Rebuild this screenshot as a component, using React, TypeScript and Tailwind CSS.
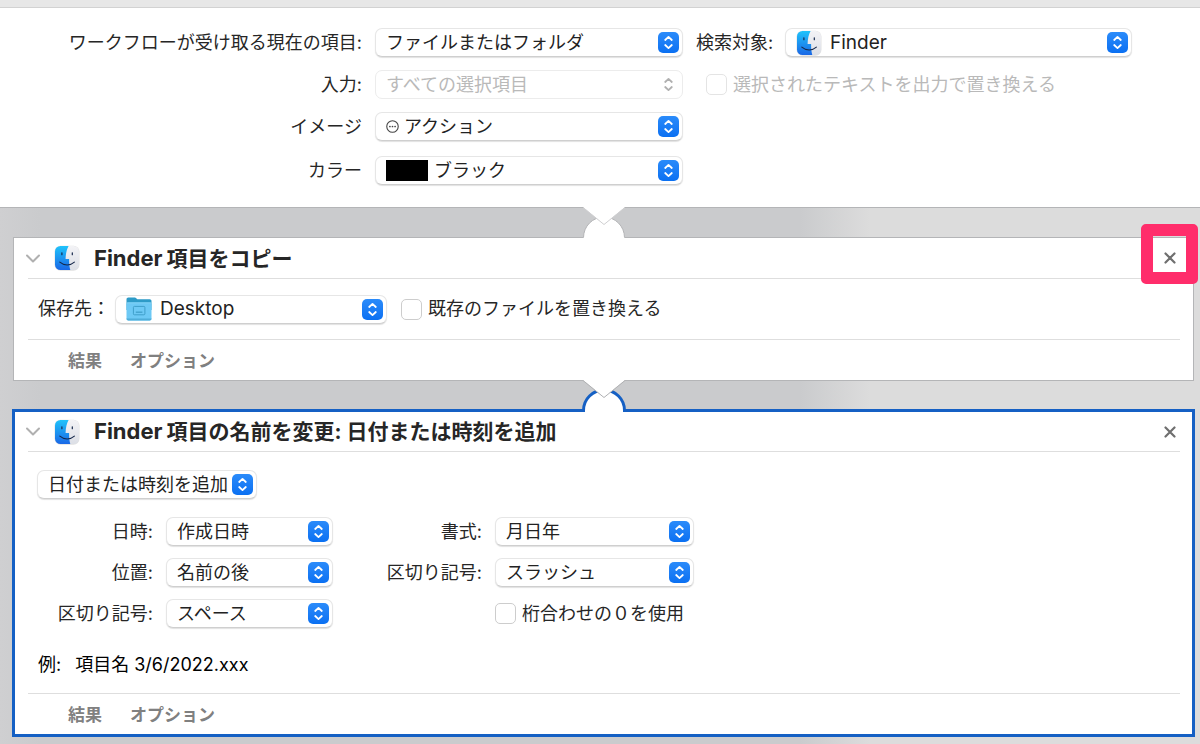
import { useState } from 'react'
import type { ReactNode } from 'react'

const FONT = "font-['Inter','Noto_Sans_CJK_JP',sans-serif]"

function FinderIcon() {
  return (
    <svg width="26" height="26" viewBox="0 0 26 26" aria-hidden="true">
      <defs>
        <linearGradient id="finderBlue" x1="0" y1="0" x2="0" y2="1">
          <stop offset="0" stopColor="#1fc3fb" />
          <stop offset="1" stopColor="#1a68e6" />
        </linearGradient>
        <linearGradient id="finderWhite" x1="0" y1="0" x2="0" y2="1">
          <stop offset="0" stopColor="#f3f3f6" />
          <stop offset="1" stopColor="#dcdfe6" />
        </linearGradient>
        <clipPath id="finderClip"><rect x="1" y="1" width="24" height="24" rx="5.5" /></clipPath>
      </defs>
      <rect x="0.5" y="0.8" width="25" height="25" rx="6" fill="#000" opacity="0.12" />
      <g clipPath="url(#finderClip)">
        <rect x="1" y="1" width="24" height="24" fill="url(#finderWhite)" />
        <path d="M1 1h13.6c-1.900 3.600-2.900 7.600-3 12.900h3.500c0 4 .3 7.700 1.200 11.100H1z" fill="url(#finderBlue)" />
        <path d="M5.800 17.200c4.300 3.700 10.500 3.700 14.600 0" fill="none" stroke="#16284a" strokeWidth="1.1" strokeLinecap="round" />
        <path d="M7.900 7.800v1.900M18.300 7.800v1.900" stroke="#16284a" strokeWidth="1.200" strokeLinecap="round" />
      </g>
    </svg>
  )
}

function FolderIcon() {
  return (
    <svg width="26" height="26" viewBox="0 0 26 26" aria-hidden="true">
      <path d="M.5 3.5C.5 2.300 1.300 1.600 2.300 1.600h6c1 0 1.500.3 2.200 1l.8.7h12.400c1 0 1.800.7 1.800 1.800V14H.5z" fill="#2d9bc8" />
      <rect x="0.500" y="6.400" width="25" height="18.200" rx="1.800" fill="#6dc9f5" />
      <path d="M.5 22.600h25c0 1.300-.7 2-1.800 2H2.300c-1.100 0-1.800-.7-1.800-2z" fill="#4fadd9" />
      <path d="M.8 6.800h24.400" stroke="#8ad8fa" strokeWidth="0.800" />
      <rect x="7.400" y="10.400" width="11.500" height="8.400" rx="1" fill="none" stroke="#3f9fca" strokeWidth="1" />
      <path d="M9.800 16.200h6.600" stroke="#3f9fca" strokeWidth="1.300" />
    </svg>
  )
}

function ActionIcon() {
  return (
    <svg width="13" height="13" viewBox="0 0 12 12" aria-hidden="true">
      <circle cx="6" cy="6" r="5.300" fill="none" stroke="#444" strokeWidth="1" />
      <circle cx="3.600" cy="6" r="0.800" fill="#444" />
      <circle cx="6" cy="6" r="0.800" fill="#444" />
      <circle cx="8.400" cy="6" r="0.800" fill="#444" />
    </svg>
  )
}

// V-shaped tail of the block above sitting over the round socket of the block below
function Connector({ active = false }: { active?: boolean }) {
  return (
    <svg
      className={`absolute left-1/2 -translate-x-1/2 ${active ? '-top-8' : '-top-[31px]'}`}
      width="46" height="34" viewBox="0 0 46 34" aria-hidden="true"
    >
      <path d="M2.500 34V30.500A20.500 20.500 0 0 1 43.500 30.500V34z" fill="#fff" />
      {active ? (
        <path d="M1 30.500H2.500A20.500 20.500 0 0 1 43.500 30.500H45" fill="none" stroke="#1560c4" strokeWidth="3" />
      ) : (
        <path d="M2.500 30.500A20.500 20.500 0 0 1 43.500 30.500" fill="none" stroke="#b4b5b7" />
      )}
      <path d="M2 0L23 17.500L44 0z" fill="#fff" />
      <path d="M2 .5L23 17.500L44 .5" fill="none" stroke={active ? '#b0b1b3' : '#cfcfd1'} strokeWidth="1" />
    </svg>
  )
}

type PopupProps = {
  id: string
  text: string
  width: string
  indent?: string
  icon?: ReactNode
  disabled?: boolean
  label?: string
}

function Popup({ id, text, width, indent = 'pl-[10px]', icon, disabled, label }: PopupProps) {
  return (
    <div className={`relative h-[29px] ${width}`}>
      <select
        id={id}
        disabled={disabled}
        aria-label={label}
        className={`block h-full w-full appearance-none rounded-[7px] border bg-white pr-6 leading-[26px] outline-none ${indent} ${
          disabled
            ? 'border-[#ececec] text-[#b9b9b9] opacity-100'
            : 'border-[#e6e6e6] border-b-[#cfcfcf] text-[#222] shadow-[0_1px_1px_rgba(0,0,0,0.12)]'
        }`}
      >
        <option>{text}</option>
      </select>
      {icon && <span className="pointer-events-none absolute inset-y-0 left-[11px] flex items-center">{icon}</span>}
      <span
        className={`pointer-events-none absolute right-1 top-1 flex size-[21px] items-center justify-center rounded-[5px] ${
          disabled ? 'text-[#b0b0b0]' : 'bg-linear-to-b from-[#2a8bfa] to-[#0a70f2] text-white'
        }`}
      >
        <svg width="11" height="15" viewBox="0 0 11 15" fill="none" stroke="currentColor" strokeWidth="1.800" strokeLinecap="round" strokeLinejoin="round" aria-hidden="true">
          <path d="M2.200 5L5.500 1.900L8.800 5M2.200 10L5.500 13.100L8.800 10" />
        </svg>
      </span>
    </div>
  )
}

function CheckField({ id, text, disabled }: { id: string; text: string; disabled?: boolean }) {
  const [on, setOn] = useState(false)
  return (
    <div className="flex items-center gap-1.5">
      <input
        id={id}
        type="checkbox"
        checked={on}
        disabled={disabled}
        onChange={e => setOn(e.target.checked)}
        className={`size-[21px] shrink-0 appearance-none rounded-[5px] border bg-white checked:bg-[#0a70f2] ${disabled ? 'border-[#e4e4e4]' : 'border-[#cdcdcd]'}`}
      />
      <label htmlFor={id} className={`whitespace-nowrap ${disabled ? 'text-[#b9b9b9]' : ''}`}>{text}</label>
    </div>
  )
}

function Label({ htmlFor, children }: { htmlFor: string; children: ReactNode }) {
  return <label htmlFor={htmlFor} className="text-right whitespace-nowrap">{children}</label>
}

type ActionProps = {
  app: string
  title: string
  active?: boolean
  marked?: boolean
  children: ReactNode
}

function Action({ app, title, active, marked, children }: ActionProps) {
  return (
    <section
      className={`relative bg-white ${
        active ? 'mt-7 mr-[5px] ml-3 border-[3px] border-[#1560c4]' : 'mt-[29px] mr-1.5 ml-[13px] border border-[#b4b5b7]'
      }`}
    >
      <Connector active={active} />
      <header className={`flex items-center border-b border-[#dedede] ${active ? 'mr-3 ml-[13px] h-10' : 'mr-[13px] ml-3.5 h-[41px]'}`}>
        <button type="button" aria-label="折りたたむ" className="mr-3.5 -ml-0.5 flex w-3.5 justify-center">
          <svg width="14" height="9" viewBox="0 0 14 9" fill="none" stroke="#b0b0b0" strokeWidth="2" strokeLinecap="round" strokeLinejoin="round" aria-hidden="true">
            <path d="M1 1.500L7 7.500L13 1.500" />
          </svg>
        </button>
        <FinderIcon />
        <h2 className="ml-3.5 flex items-baseline gap-1 text-[21px] leading-7 font-bold whitespace-nowrap text-[#262626]">
          <span className="text-[22px]">{app}</span>
          <span>{title}</span>
        </h2>
        <button type="button" aria-label="閉じる" className="relative mr-1 ml-auto flex size-3 items-center justify-center">
          <svg width="12" height="12" viewBox="0 0 12 12" stroke="#6f6f6f" strokeWidth="2.200" strokeLinecap="round" aria-hidden="true">
            <path d="M1.500 1.500L10.500 10.500M10.500 1.500L1.500 10.500" />
          </svg>
          {marked && (
            <span className="pointer-events-none absolute -top-7 -left-[23px] h-[60px] w-[57px] rounded-[5px] border-[12px] border-[#ff2d6b]" />
          )}
        </button>
      </header>
      {children}
      <footer
        className={`flex h-[41px] items-center gap-7 border-t border-[#dedede] pt-px pl-10 text-[17px] font-bold text-[#808080] ${
          active ? 'mr-3 ml-[13px]' : 'mr-[13px] ml-3.5'
        }`}
      >
        <button type="button">結果</button>
        <button type="button">オプション</button>
      </footer>
    </section>
  )
}

export default function App() {
  return (
    <main className={`min-h-screen bg-[linear-gradient(to_right,#cfcfd1_0,#cacbcd_40px,#cacbcd_800px,#dcdcdc_870px)] text-[18px] leading-6 text-[#262626] ${FONT}`}>
      <div className="h-2 border-b border-[#d2d2d2] bg-[#e7e7e7]" />

      {/* Workflow settings */}
      <div className="grid grid-cols-[362px_308px_1fr] items-center gap-x-[13px] gap-y-[13px] border-b border-[#b4b5b7] bg-white pt-5 pr-[68px] pb-[22px]">
        <Label htmlFor="receives">ワークフローが受け取る現在の項目:</Label>
        <Popup id="receives" text="ファイルまたはフォルダ" width="w-full" />
        <div className="flex items-center">
          <label htmlFor="target" className="w-[89px]">検索対象:</label>
          <Popup id="target" text="Finder" width="flex-1 text-[19px]" indent="pl-[44px]" icon={<FinderIcon />} />
        </div>

        <Label htmlFor="input">入力:</Label>
        <Popup id="input" text="すべての選択項目" width="w-full" disabled />
        <div className="pl-[10px]">
          <CheckField id="replaceText" text="選択されたテキストを出力で置き換える" disabled />
        </div>

        <Label htmlFor="image">イメージ</Label>
        <Popup id="image" text="アクション" width="w-full" indent="pl-[28px]" icon={<ActionIcon />} />
        <div />

        <div className="col-span-2 mt-0.5 grid grid-cols-subgrid items-center">
          <Label htmlFor="color">カラー</Label>
          <Popup
            id="color"
            text="ブラック"
            width="w-full"
            indent="pl-[58px]"
            icon={<span className="h-[21px] w-[42px] bg-black" />}
          />
        </div>
      </div>

      <Action app="Finder" title="項目をコピー" marked>
        <div className="flex h-[60px] items-center pl-6">
          <label htmlFor="dest" className="w-[77px] whitespace-nowrap">保存先：</label>
          <Popup id="dest" text="Desktop" width="w-[272px] text-[19px]" indent="pl-[44px]" icon={<FolderIcon />} />
          <div className="ml-[14px]">
            <CheckField id="overwrite" text="既存のファイルを置き換える" />
          </div>
        </div>
      </Action>

      <Action app="Finder" title="項目の名前を変更: 日付または時刻を追加" active>
        <div className="pt-[18px] pb-4">
          <div className="pl-[22px]">
            <Popup id="mode" text="日付または時刻を追加" width="w-[220px]" label="変更方法" />
          </div>
          <div className="mt-[18px] grid grid-cols-[138px_167px_136px_199px] items-center gap-x-[13px] gap-y-3">
            <Label htmlFor="date">日時:</Label>
            <Popup id="date" text="作成日時" width="w-full" />
            <Label htmlFor="format">書式:</Label>
            <Popup id="format" text="月日年" width="w-full" />

            <Label htmlFor="place">位置:</Label>
            <Popup id="place" text="名前の後" width="w-full" />
            <Label htmlFor="sep">区切り記号:</Label>
            <Popup id="sep" text="スラッシュ" width="w-full" />

            <Label htmlFor="nameSep">区切り記号:</Label>
            <Popup id="nameSep" text="スペース" width="w-full" />
            <div className="col-start-4">
              <CheckField id="zeros" text="桁合わせの０を使用" />
            </div>
          </div>
          <p className="mt-[25px] flex gap-[14px] pl-[23px] text-black">
            <span>例:</span>
            <span>項目名 3/6/2022.xxx</span>
          </p>
        </div>
      </Action>
    </main>
  )
}
